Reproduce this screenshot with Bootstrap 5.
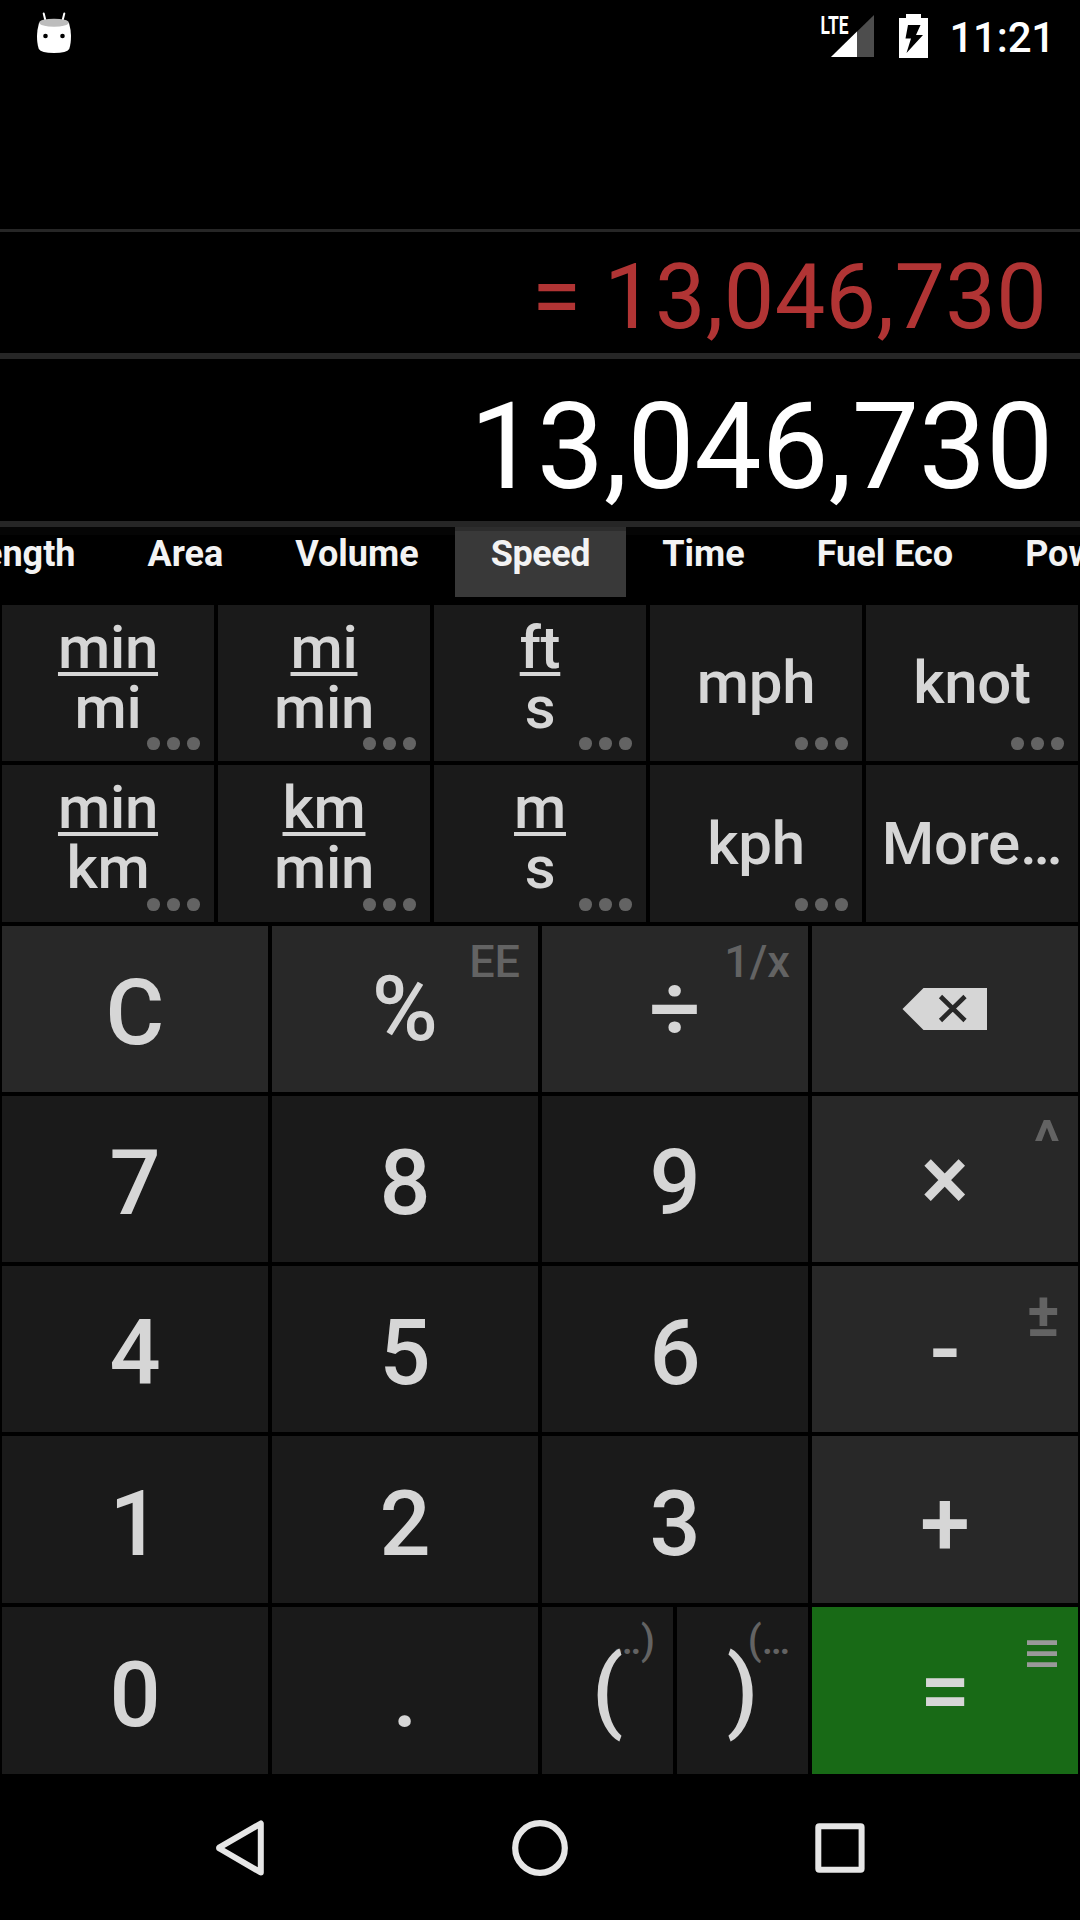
<!DOCTYPE html>
<html lang="en">
<head>
<meta charset="utf-8">
<meta name="viewport" content="width=device-width, initial-scale=1">
<title>Calculator</title>
<link href="https://cdn.jsdelivr.net/npm/bootstrap@5.3.0/dist/css/bootstrap.min.css" rel="stylesheet">
<style>
  body { font-family: Roboto, "Liberation Sans", sans-serif; background: #000; color: #fff; }
  svg { display: block; }
  .screen { width: 1080px; height: 1920px; }
  .status { height: 72px; padding: 0 25px 0 37px; }
  .clock { font-size: 42px; font-weight: 500; line-height: 72px; padding-top: 2px; letter-spacing: -.2px; }
  .history { height: 157px; }
  .rule-thin { height: 3px; background: #262626; }
  .rule-thick { height: 6px; background: #262626; }
  .result { height: 121px; font-size: 90px; line-height: 121px; color: #b13434; padding: 5px 33px 0 0; letter-spacing: .28px; }
  .entry { height: 162px; font-size: 120px; line-height: 162px; padding: 7px 27px 0 0; letter-spacing: -.35px; }
  .tabs { height: 78px; position: relative; padding-left: 11px; }
  .tabs::before { content: ""; position: absolute; inset: 0 0 auto 0; height: 8px; background: #050505; }
  .tab { position: relative; height: 70px; padding: 0 36px; font-size: 36px; font-weight: 700; line-height: 55px; color: #f3f3f3; white-space: nowrap; }
  .tab-on { background: #393939; border-top: 4px solid #2d2d2d; line-height: 47px; letter-spacing: -.4px; }
  .pad { display: grid; gap: 4px; padding: 0 2px; }
  .units { grid-template-columns: repeat(5, 1fr); grid-template-rows: 156px 157px; margin-bottom: 4px; }
  .digits { grid-template-columns: repeat(4, 1fr); grid-template-rows: 166px 166px 166px 167px 167px; }
  .key { position: relative; display: flex; align-items: center; justify-content: center; background: #1a1a1a; color: #d6d6d6; font-weight: 500; font-size: 90px; line-height: 1; min-width: 0; }
  .op { background: #282828; padding-top: 2px; }
  .op-icon { padding-top: 0; }
  .num { padding-top: 10px; }
  .equals { background: #186a16; padding-top: 2px; }
  .unit { font-size: 60px; letter-spacing: -.3px; }
  .frac { line-height: 60px; margin-top: -11px; text-align: center; }
  .over { display: block; text-decoration: underline 4px; text-underline-offset: 4px; text-decoration-skip-ink: none; }
  .under { display: block; }
  .dots { position: absolute; right: 14px; bottom: 11px; display: flex; gap: 7.3px; }
  .dots i { width: 12.7px; height: 12.7px; border-radius: 50%; background: #636363; }
  .hint { position: absolute; top: 13px; right: 18px; font-size: 45px; line-height: 1; color: #636363; font-weight: 500; }
  .hint-big { font-size: 60px; font-weight: 700; top: 16px; right: 18px; }
  .hint-sign { font-size: 62px; top: 18px; }
  .hint-paren { font-size: 40px; top: 14px; }
  .front { position: relative; }
  .corner { position: absolute; }
  .navbtn { width: 300px; height: 144px; display: flex; justify-content: center; padding-top: 36px; }
</style>
<script src="https://cdn.jsdelivr.net/npm/bootstrap@5.3.0/dist/js/bootstrap.bundle.min.js"></script>
</head>
<body>
<div class="screen d-flex flex-column overflow-hidden">
  <header class="status d-flex justify-content-between">
    <svg width="34" height="72" viewBox="37 0 34 72">
      <path d="M43.700 13.500L45.800 22M64.300 13.500L62.200 22" stroke="#fff" stroke-width="2" stroke-linecap="round"/>
      <path d="M39 23Q54 16 69 23Q71 30 71 36Q71 44 69.200 49Q67 53 54 53Q41 53 38.800 49Q37 44 37 36Q37 30 39 23Z" fill="#fff"/>
      <ellipse cx="54" cy="22.700" rx="14.800" ry="4" fill="#bdbdbd"/>
      <circle cx="45.500" cy="36" r="2.300"/><circle cx="62.500" cy="36" r="2.300"/>
    </svg>
    <div class="d-flex">
      <svg width="129" height="72" viewBox="820 0 129 72">
        <path d="M874 15V57H831Z" fill="#4d4d4d"/>
        <path d="M857 31.500V57H831Z" fill="#fff"/>
        <text x="820.500" y="33.500" font-family="Roboto" font-weight="700" font-size="26.500" textLength="28" lengthAdjust="spacingAndGlyphs" fill="#fff">LTE</text>
        <path d="M906 14H921V18H928V58H899V18H906Z" fill="#fff"/>
        <path d="M908 25H920.500L916 35H923L906.500 53L911 38.500H905.500Z"/>
      </svg>
      <div class="clock">11:21</div>
    </div>
  </header>
  <div class="history"></div>
  <div class="rule-thin"></div>
  <div class="result text-end">= 13,046,730</div>
  <div class="rule-thick"></div>
  <div class="entry text-end">13,046,730</div>
  <div class="rule-thick"></div>
  <nav class="tabs d-flex justify-content-center">
    <div class="tab">Length</div><div class="tab">Area</div><div class="tab">Volume</div><div class="tab tab-on">Speed</div><div class="tab">Time</div><div class="tab">Fuel Eco</div><div class="tab">Power</div>
  </nav>
  <section class="pad units">
    <div class="key unit"><div class="frac"><span class="over">min</span><span class="under">mi</span></div><div class="dots"><i></i><i></i><i></i></div></div>
    <div class="key unit"><div class="frac"><span class="over">mi</span><span class="under">min</span></div><div class="dots"><i></i><i></i><i></i></div></div>
    <div class="key unit"><div class="frac"><span class="over">ft</span><span class="under">s</span></div><div class="dots"><i></i><i></i><i></i></div></div>
    <div class="key unit">mph<div class="dots"><i></i><i></i><i></i></div></div>
    <div class="key unit">knot<div class="dots"><i></i><i></i><i></i></div></div>
    <div class="key unit"><div class="frac"><span class="over">min</span><span class="under">km</span></div><div class="dots"><i></i><i></i><i></i></div></div>
    <div class="key unit"><div class="frac"><span class="over">km</span><span class="under">min</span></div><div class="dots"><i></i><i></i><i></i></div></div>
    <div class="key unit"><div class="frac"><span class="over">m</span><span class="under">s</span></div><div class="dots"><i></i><i></i><i></i></div></div>
    <div class="key unit">kph<div class="dots"><i></i><i></i><i></i></div></div>
    <div class="key unit">More…</div>
  </section>
  <section class="pad digits">
    <div class="key op num">C</div>
    <div class="key op">%<span class="hint">EE</span></div>
    <div class="key op">÷<span class="hint">1/x</span></div>
    <div class="key op op-icon">
      <svg width="86" height="42" viewBox="902 988 86 42"><path d="M902.500 1009L923.500 988H987V1030H923.500Z" fill="#d6d6d6"/><path d="M940.500 996.500L965 1020.500M965 996.500L940.500 1020.500" stroke="#282828" stroke-width="4.600"/></svg>
    </div>
    <div class="key num">7</div>
    <div class="key num">8</div>
    <div class="key num">9</div>
    <div class="key op">×<span class="hint hint-big">^</span></div>
    <div class="key num">4</div>
    <div class="key num">5</div>
    <div class="key num">6</div>
    <div class="key op">-<span class="hint hint-big hint-sign">±</span></div>
    <div class="key num">1</div>
    <div class="key num">2</div>
    <div class="key num">3</div>
    <div class="key op num">+</div>
    <div class="key num">0</div>
    <div class="key num">.</div>
    <div class="d-flex gap-1">
      <div class="key flex-fill w-50"><span class="hint hint-paren">…)</span><span class="front">(</span></div>
      <div class="key flex-fill w-50"><span class="hint hint-paren">(…</span><span class="front">)</span></div>
    </div>
    <div class="key equals">=<svg class="corner end-0 top-0" width="66" height="66" viewBox="1012 1607 66 66"><path d="M1027 1642.600H1057M1027 1653.700H1057M1027 1664.600H1057" stroke="#999" stroke-width="4.800"/></svg></div>
  </section>
  <footer class="d-flex justify-content-center mt-auto">
    <div class="navbtn"><svg width="80" height="80" viewBox="200 1812 80 80"><path d="M260.800 1823.500V1872.500L219.500 1848.500Q218.500 1848 219.500 1847.300Z" fill="none" stroke="#e6e6e6" stroke-width="6" stroke-linejoin="round"/></svg></div>
    <div class="navbtn"><svg width="80" height="80" viewBox="500 1812 80 80"><circle cx="540" cy="1848" r="24.800" fill="none" stroke="#e6e6e6" stroke-width="6.200"/></svg></div>
    <div class="navbtn"><svg width="80" height="80" viewBox="800 1812 80 80"><rect x="818.300" y="1826.200" width="43.300" height="43.600" rx="1" fill="none" stroke="#e6e6e6" stroke-width="6" stroke-linejoin="round"/></svg></div>
  </footer>
</div>
</body>
</html>
